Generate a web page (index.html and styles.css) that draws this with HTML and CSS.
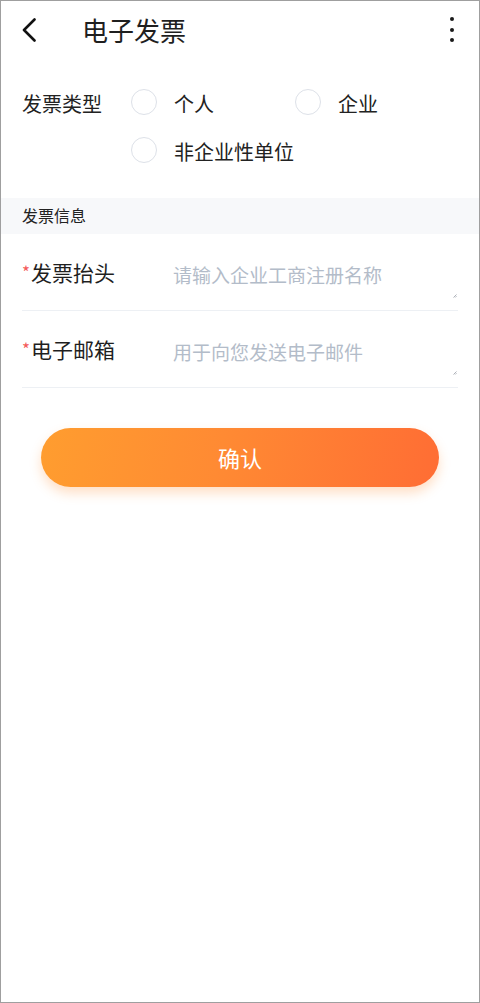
FILE: index.html
```html
<!DOCTYPE html>
<html lang="zh-CN">
<head>
<meta charset="utf-8">
<title>电子发票</title>
<link rel="stylesheet" href="styles.css">
</head>
<body>
<div class="screen">
  <header class="topbar">
    <svg class="back" width="14" height="24" viewBox="0 0 14 24"><path d="M12.5 1.5 L2 12 L12.5 22.5" fill="none" stroke="#111" stroke-width="2.6" stroke-linecap="round" stroke-linejoin="round"/></svg>
    <h1 class="title">电子发票</h1>
    <div class="more"><span></span><span></span><span></span></div>
  </header>

  <section class="type-row">
    <div class="type-label">发票类型</div>
    <div class="options">
      <label class="opt"><span class="radio"></span><span class="opt-text">个人</span></label>
      <label class="opt"><span class="radio"></span><span class="opt-text">企业</span></label>
      <label class="opt"><span class="radio"></span><span class="opt-text">非企业性单位</span></label>
    </div>
  </section>

  <div class="band">发票信息</div>

  <div class="field">
    <div class="flabel"><span class="req">*</span>发票抬头</div>
    <div class="inputwrap">
      <textarea class="input" placeholder="请输入企业工商注册名称"></textarea>
      <svg class="grip" width="4" height="4" viewBox="0 0 4 4"><path d="M0.5 3.5 L3.5 0.5 M2.2 3.5 L3.5 2.2" stroke="#9aa0a8" stroke-width="0.8"/></svg>
    </div>
  </div>

  <div class="field">
    <div class="flabel"><span class="req">*</span>电子邮箱</div>
    <div class="inputwrap">
      <textarea class="input" placeholder="用于向您发送电子邮件"></textarea>
      <svg class="grip" width="4" height="4" viewBox="0 0 4 4"><path d="M0.5 3.5 L3.5 0.5 M2.2 3.5 L3.5 2.2" stroke="#9aa0a8" stroke-width="0.8"/></svg>
    </div>
  </div>

  <button class="confirm">确认</button>
</div>
</body>
</html>
```

FILE: styles.css
```css
html, body {
  margin: 0;
  padding: 0;
  background: #fff;
}
body {
  font-family: "Noto Sans CJK SC", "Noto Sans", sans-serif;
  color: #222;
}
.screen {
  width: 480px;
  height: 1003px;
  box-sizing: border-box;
  border: 1px solid #9f9f9f;
  background: #fff;
  overflow: hidden;
}
.topbar {
  height: 57px;
  display: flex;
  align-items: center;
  padding: 0 0 0 21px;
}
.back {
  display: block;
  margin-top: 0px;
}
.title {
  margin: 0 0 0 46px;
  font-size: 26px;
  font-weight: 400;
  line-height: 36px;
  color: #1f1f1f;
  flex: 1;
}
.more {
  display: flex;
  flex-direction: column;
  gap: 6.5px;
  width: 4px;
  margin-right: 25px;
  margin-top: 0px;
}
.more span {
  width: 4px;
  height: 4px;
  border-radius: 50%;
  background: #1a1a1a;
}
.type-row {
  display: flex;
  padding: 0 21px;
  margin-top: 31px;
}
.type-label {
  width: 109px;
  font-size: 20px;
  line-height: 26px;
  color: #222;
  margin-top: 2px;
}
.options {
  display: grid;
  grid-template-columns: 164px auto;
  row-gap: 22px;
}
.opt {
  display: flex;
  align-items: center;
  height: 26px;
}
.radio {
  width: 26px;
  height: 26px;
  box-sizing: border-box;
  border: 1.5px solid #dde1e8;
  border-radius: 50%;
  flex: none;
}
.opt-text {
  margin-left: 17px;
  font-size: 20px;
  line-height: 26px;
  color: #222;
  position: relative;
  top: 2px;
}
.band {
  margin-top: 35px;
  height: 36px;
  line-height: 35px;
  background: #f7f8fa;
  padding-left: 21px;
  font-size: 16px;
  color: #222;
}
.field {
  display: flex;
  align-items: flex-start;
  margin: 0 21px;
  height: 77px;
  box-sizing: border-box;
  padding-top: 23px;
  border-bottom: 1px solid #edf0f4;
}
.flabel {
  width: 151px;
  flex: none;
  font-size: 21px;
  line-height: 30px;
  color: #1f1f1f;
}
.req {
  color: #f45a5a;
  font-size: 17px;
  vertical-align: 2px;
  margin-right: 1px;
}
.inputwrap {
  flex: 1;
  position: relative;
  margin-top: 5px;
  height: 37px;
}
.input {
  display: block;
  width: 100%;
  height: 37px;
  box-sizing: border-box;
  border: none;
  outline: none;
  resize: none;
  padding: 0;
  margin: 0;
  font-family: "Noto Sans CJK SC", "Noto Sans", sans-serif;
  font-size: 19px;
  line-height: 26px;
  color: #222;
  background: transparent;
  overflow: hidden;
}
.input::placeholder {
  color: #b3bcc9;
}
.grip {
  position: absolute;
  right: 1px;
  bottom: 1px;
}
.confirm {
  display: block;
  margin: 40px 40px 0;
  width: calc(100% - 80px);
  height: 59px;
  border: none;
  border-radius: 30px;
  background: linear-gradient(100deg, #ff9d2f 0%, #ff8a33 45%, #ff6d34 100%);
  box-shadow: 0 6px 12px rgba(255, 140, 50, 0.28);
  color: #fff;
  font-family: "Noto Sans CJK SC", "Noto Sans", sans-serif;
  font-size: 22px;
  line-height: 59px;
  padding: 0;
}
```
